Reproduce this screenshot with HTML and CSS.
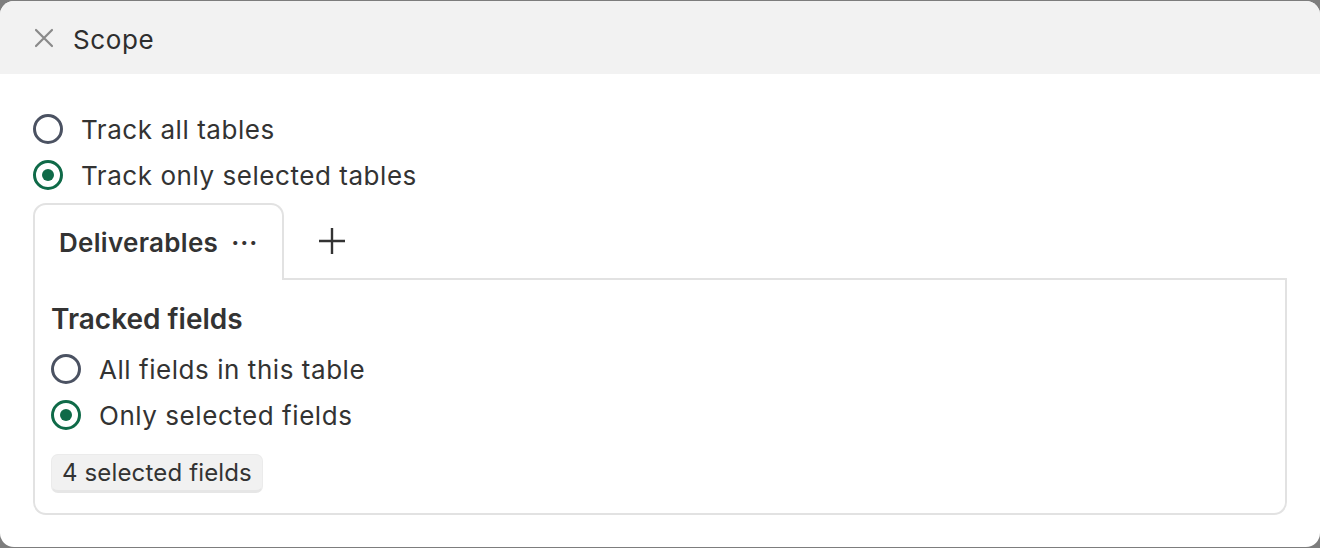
FILE: index.html
```html
<!DOCTYPE html>
<html>
<head>
<meta charset="utf-8">
<link rel="stylesheet" href="styles.css">
</head>
<body>
<div class="dialog">
  <div class="header">
    <svg class="close" width="20" height="20" viewBox="0 0 20 20"><path d="M2 2L18 18M18 2L2 18" stroke="#8a8a8a" stroke-width="2.2" stroke-linecap="round"/></svg>
    <span class="title">Scope</span>
  </div>
  <div class="body">
    <div class="radios">
      <label class="radio"><span class="dot"></span><span>Track all tables</span></label>
      <label class="radio checked"><span class="dot"></span><span>Track only selected tables</span></label>
    </div>
    <div class="tabs">
      <div class="tab active"><span class="tab-name">Deliverables</span><span class="more">···</span></div>
      <div class="add">
        <svg width="28" height="28" viewBox="0 0 28 28"><path d="M14 1V27M1 14H27" stroke="#333" stroke-width="2.4"/></svg>
      </div>
      <div class="tab-rest"></div>
    </div>
    <div class="panel">
      <div class="panel-title">Tracked fields</div>
      <div class="radios">
        <label class="radio"><span class="dot"></span><span>All fields in this table</span></label>
        <label class="radio checked"><span class="dot"></span><span>Only selected fields</span></label>
      </div>
      <button class="fields-btn">4 selected fields</button>
    </div>
  </div>
</div>
</body>
</html>
```
FILE: styles.css
```css
* { box-sizing: border-box; }
html, body { margin: 0; padding: 0; }
body {
  background: #7d7d7d;
  padding: 1px 0;
  height: 548px;
  font-family: Inter, "Noto Sans", sans-serif;
  color: #333;
}
.dialog {
  height: 546px;
  background: #fff;
  border-radius: 14px;
  overflow: hidden;
}
.header {
  height: 73px;
  background: #f2f2f2;
  display: flex;
  align-items: center;
  padding-left: 34px;
  padding-top: 3px;
}
.close { display: block; margin-top: -3px; }
.title {
  margin-left: 19px;
  font-size: 26px;
  color: #2e2e2e;
  letter-spacing: 0.6px;
}
.body {
  padding: 40px 33px 0 33px;
}
.radios {
  display: flex;
  flex-direction: column;
  gap: 16px;
}
.radio {
  display: flex;
  align-items: center;
  height: 30px;
  font-size: 26px;
  letter-spacing: 0.55px;
  color: #333;
}
.dot {
  width: 30px;
  height: 30px;
  border-radius: 50%;
  border: 3px solid #4b5262;
  margin-right: 18px;
  flex: none;
  display: flex;
  align-items: center;
  justify-content: center;
}
.radio.checked .dot { border-color: #0f6a48; }
.radio.checked .dot::after {
  content: "";
  width: 12px;
  height: 12px;
  border-radius: 50%;
  background: #0f6a48;
}
.tabs {
  display: flex;
  margin-top: 13px;
  height: 77px;
}
.tab {
  width: 251px;
  border: 2px solid #e2e2e2;
  border-bottom: none;
  border-radius: 13px 13px 0 0;
  display: flex;
  align-items: center;
  padding-left: 24px;
  background: #fff;
}
.tab-name {
  font-size: 26px;
  font-weight: 600;
  letter-spacing: 0.3px;
  color: #333;
}
.more {
  margin-left: 13px;
  font-size: 24px;
  letter-spacing: 1px;
  color: #333;
  font-weight: 700;
}
.add {
  width: 95px;
  display: flex;
  align-items: center;
  justify-content: center;
  border-bottom: 2px solid #e2e2e2;
}
.add svg { display: block; }
.tab-rest {
  flex: 1;
  border-bottom: 2px solid #e2e2e2;
}
.panel {
  border: 2px solid #e2e2e2;
  border-top: none;
  border-radius: 0 0 13px 13px;
  height: 235px;
  padding: 22px 16px 0 16px;
}
.panel-title {
  font-size: 28px;
  font-weight: 600;
  color: #333;
  margin-bottom: 18px;
}
.fields-btn {
  margin-top: 24px;
  font-family: inherit;
  font-size: 24px;
  letter-spacing: 0.15px;
  color: #333;
  background: #f1f1f1;
  border: 1px solid #ebebeb;
  border-bottom: 3px solid #e6e6e6;
  border-radius: 7px;
  padding: 0 10px;
  height: 39px;
  display: flex;
  align-items: center;
}
```
